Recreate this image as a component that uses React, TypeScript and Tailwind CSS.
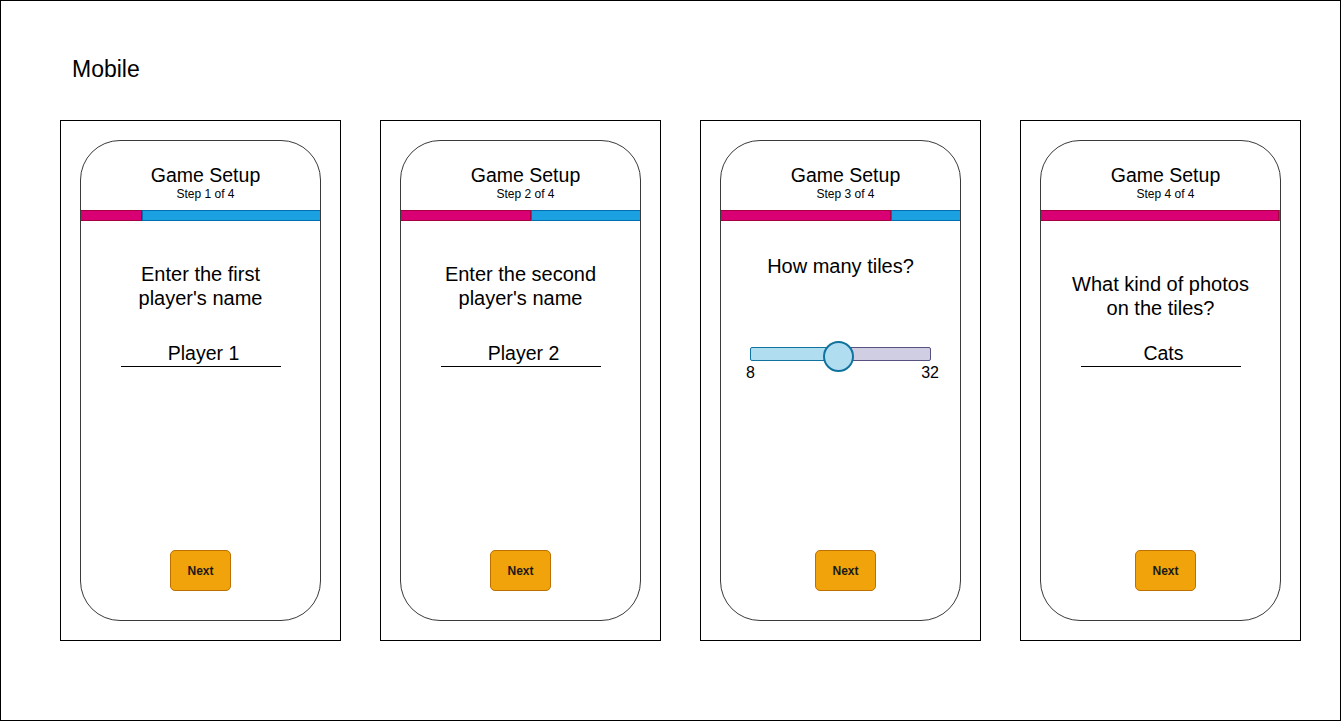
import React from 'react';

const font = { fontFamily: '"Liberation Sans", Arial, sans-serif' };

const ProgressBar = ({ done }: { done: string }) => (
  <div className="flex h-[11px] mt-[9px] -mx-px">
    <div className={`${done} h-full bg-[#d80073] border border-[#a50040]`}></div>
    <div className="flex-1 h-full bg-[#1ba1e2] border border-[#006eaf]"></div>
  </div>
);

const NextButton = ({ shift }: { shift?: boolean }) => (
  <div className={`mt-auto mb-[29px] flex justify-center ${shift ? 'pl-[10px]' : ''}`}>
    <button className="w-[61px] h-[41px] rounded-[5px] bg-[#f0a30a] border border-[#bd7000] text-[12px] font-bold text-[#1a1a1a]">
      Next
    </button>
  </div>
);

const TextInput = ({ value, gap }: { value: string; gap: string }) => (
  <div className={`mx-auto ${gap} w-[160px] pl-[6px] pb-[1px] border-b border-black text-center text-[19.5px] leading-[24px]`}>
    {value}
  </div>
);

const Phone = ({
  step,
  done,
  children,
  shiftButton,
}: {
  step: number;
  done: string;
  children: React.ReactNode;
  shiftButton?: boolean;
}) => (
  <div className="w-[281px] h-[521px] border border-black p-[19px]">
    <div className="h-full w-full rounded-[40px] border border-[#3a3a3a] flex flex-col overflow-hidden">
      <div className="pt-[23px] pl-[10px] text-center">
        <div className="text-[19.5px] leading-[23px]">Game Setup</div>
        <div className="text-[12px] leading-[13px] mt-[1px]">Step {step} of 4</div>
      </div>
      <ProgressBar done={done} />
      {children}
      <NextButton shift={shiftButton} />
    </div>
  </div>
);

const Slider = () => (
  <div className="relative mx-[29px] mt-[63px] h-[50px]">
    <div className="flex h-[14px] mt-[6px]">
      <div className="w-[90px] h-full bg-[#b1ddf0] border border-[#10739e] rounded-l-[2px]"></div>
      <div className="flex-1 h-full bg-[#d0cee2] border border-[#56517e] rounded-r-[2px]"></div>
    </div>
    <div className="absolute left-[73px] top-0 w-[31px] h-[31px] rounded-full bg-[#b1ddf0] border-2 border-[#10739e]"></div>
    <div className="flex justify-between text-[16px] leading-[16px] -mx-[4px] mt-[4px]">
      <span>8</span>
      <span className="-mr-[4px]">32</span>
    </div>
  </div>
);

export default function App() {
  return (
    <div style={font} className="w-[1341px] h-[721px] border border-black bg-white text-black">
      <div className="pl-[71px] pt-[55px] text-[23px] leading-[26px]">Mobile</div>
      <div className="flex gap-[39px] pl-[59px] mt-[38px]">
        <Phone step={1} done="w-[62px]">
          <div className="mt-[41px] text-center text-[20px] leading-[24px]">
            Enter the first
            <br />
            player's name
          </div>
          <TextInput value="Player 1" gap="mt-[31px]" />
        </Phone>
        <Phone step={2} done="w-[131px]">
          <div className="mt-[41px] text-center text-[20px] leading-[24px]">
            Enter the second
            <br />
            player's name
          </div>
          <TextInput value="Player 2" gap="mt-[31px]" />
        </Phone>
        <Phone step={3} done="w-[171px]" shiftButton>
          <div className="mt-[33px] text-center text-[20px] leading-[24px]">How many tiles?</div>
          <Slider />
        </Phone>
        <Phone step={4} done="w-full" shiftButton>
          <div className="mt-[51px] text-center text-[20px] leading-[24px]">
            What kind of photos
            <br />
            on the tiles?
          </div>
          <TextInput value="Cats" gap="mt-[21px]" />
        </Phone>
      </div>
    </div>
  );
}
